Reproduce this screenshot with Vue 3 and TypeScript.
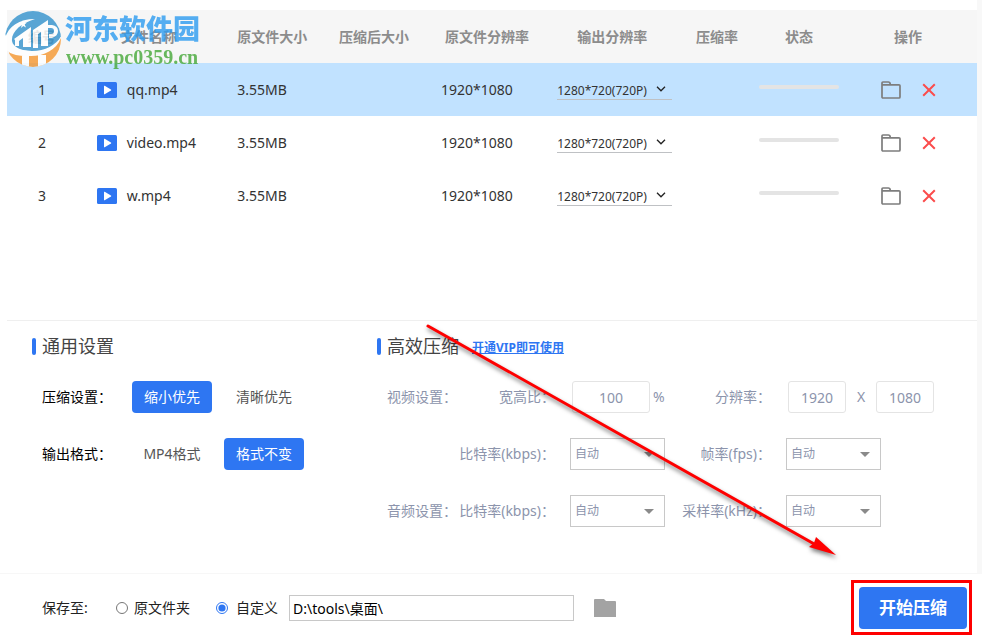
<script setup lang="ts">
import { ref } from 'vue'

interface VideoFile {
  id: number
  name: string
  size: string
  resolution: string
  output: string
}

const files = ref<VideoFile[]>([
  { id: 1, name: 'qq.mp4', size: '3.55MB', resolution: '1920*1080', output: '1280*720(720P)' },
  { id: 2, name: 'video.mp4', size: '3.55MB', resolution: '1920*1080', output: '1280*720(720P)' },
  { id: 3, name: 'w.mp4', size: '3.55MB', resolution: '1920*1080', output: '1280*720(720P)' },
])

const columns = ['编号', '文件名称', '原文件大小', '压缩后大小', '原文件分辨率', '输出分辨率', '压缩率', '状态', '操作']

const selectedId = ref(1)
const mode = ref('small')
const format = ref('same')
const saveTo = ref('custom')
const savePath = ref('D:\\tools\\桌面\\')
const ratio = ref('100')
const outWidth = ref('1920')
const outHeight = ref('1080')

function removeFile(id: number) {
  files.value = files.value.filter((f) => f.id !== id)
}
</script>

<template>
  <div class="app">
    <main class="workspace">
      <section class="files">
        <table class="file-table">
          <colgroup>
            <col class="c-no" /><col class="c-name" /><col class="c-size" /><col class="c-after" />
            <col class="c-res" /><col class="c-out" /><col class="c-rate" /><col class="c-state" /><col class="c-ops" />
          </colgroup>
          <thead>
            <tr>
              <th v-for="c in columns" :key="c" scope="col">{{ c }}</th>
            </tr>
          </thead>
          <tbody>
            <tr v-for="f in files" :key="f.id" :class="{ selected: f.id === selectedId }" @click="selectedId = f.id">
              <td class="no">{{ f.id }}</td>
              <td class="name">
                <div class="name-box">
                  <svg class="play" width="20" height="16" viewBox="0 0 20 16" aria-hidden="true">
                    <rect width="20" height="16" rx="1.5" fill="#2e76f2" />
                    <path d="M7 4.200v7.600q0 .8.7.4l6.200-3.600q.8-.6 0-1.200l-6.200-3.600q-.7-.4-.7.4z" fill="#fff" />
                  </svg>
                  <span>{{ f.name }}</span>
                </div>
              </td>
              <td class="indent">{{ f.size }}</td>
              <td></td>
              <td class="indent">{{ f.resolution }}</td>
              <td class="out">
                <div class="line-select">
                  <select v-model="f.output" :aria-label="'输出分辨率 ' + f.name">
                    <option>1280*720(720P)</option>
                  </select>
                  <svg class="chevron" width="10" height="6" viewBox="0 0 10 6" aria-hidden="true">
                    <path d="M1 .8l4 4 4-4" fill="none" stroke="#222" stroke-width="1.300" />
                  </svg>
                </div>
              </td>
              <td></td>
              <td class="state"><progress value="0" max="100" :aria-label="'状态 ' + f.name"></progress></td>
              <td class="ops">
                <div class="ops-box">
                  <button type="button" class="icon-btn" :aria-label="'打开文件夹 ' + f.name">
                    <svg width="20" height="18" viewBox="0 0 20 18" aria-hidden="true">
                      <path d="M1 16V2.200Q1 1 2 1h5.500q1.200 0 1.500 1l.3 1.800H18q1 0 1 1V16q0 1-1 1H2q-1 0-1-1zM1 3.900h9" fill="none" stroke="#7d7d7d" stroke-width="1.700" />
                    </svg>
                  </button>
                  <button type="button" class="icon-btn" :aria-label="'删除 ' + f.name" @click.stop="removeFile(f.id)">
                    <svg width="14" height="14" viewBox="0 0 14 14" aria-hidden="true">
                      <path d="M1.200 1.200l11.600 11.600M12.800 1.200L1.200 12.800" stroke="#fb4c4c" stroke-width="2" />
                    </svg>
                  </button>
                </div>
              </td>
            </tr>
          </tbody>
        </table>
      </section>

      <section class="settings">
        <div class="general">
          <h2>通用设置</h2>
          <div class="option-row" role="group" aria-labelledby="mode-label">
            <span id="mode-label" class="option-label">压缩设置：</span>
            <button type="button" class="choice" :class="{ on: mode === 'small' }" @click="mode = 'small'">缩小优先</button>
            <button type="button" class="choice" :class="{ on: mode === 'clear' }" @click="mode = 'clear'">清晰优先</button>
          </div>
          <div class="option-row" role="group" aria-labelledby="format-label">
            <span id="format-label" class="option-label">输出格式：</span>
            <button type="button" class="choice" :class="{ on: format === 'mp4' }" @click="format = 'mp4'">MP4格式</button>
            <button type="button" class="choice" :class="{ on: format === 'same' }" @click="format = 'same'">格式不变</button>
          </div>
        </div>

        <div class="advanced">
          <div class="heading-row">
            <h2>高效压缩</h2>
            <a href="#vip" class="vip">开通VIP即可使用</a>
          </div>
          <div class="param-row">
            <span>视频设置：</span>
            <label class="right" for="ratio">宽高比：</label>
            <div class="field numeric"><input id="ratio" v-model="ratio" class="num wide" type="text" /><span class="unit">%</span></div>
            <label class="right" for="out-w">分辨率：</label>
            <div class="field numeric">
              <input id="out-w" v-model="outWidth" class="num" type="text" />
              <span class="times">X</span>
              <input v-model="outHeight" class="num" type="text" aria-label="高度" />
            </div>
          </div>
          <div class="param-row">
            <span></span>
            <label class="right" for="v-bitrate">比特率(kbps)：</label>
            <div class="field box-select"><select id="v-bitrate"><option>自动</option></select></div>
            <label class="right" for="fps">帧率(fps)：</label>
            <div class="field box-select"><select id="fps"><option>自动</option></select></div>
          </div>
          <div class="param-row">
            <span>音频设置：</span>
            <label class="right" for="a-bitrate">比特率(kbps)：</label>
            <div class="field box-select"><select id="a-bitrate"><option>自动</option></select></div>
            <label class="right" for="sample">采样率(kHz)：</label>
            <div class="field box-select"><select id="sample"><option>自动</option></select></div>
          </div>
        </div>
      </section>
    </main>

    <footer class="footer">
      <span class="save-label">保存至:</span>
      <label class="radio"><input v-model="saveTo" type="radio" name="save" value="origin" />原文件夹</label>
      <label class="radio custom"><input v-model="saveTo" type="radio" name="save" value="custom" />自定义</label>
      <input v-model="savePath" class="path" type="text" aria-label="保存路径" />
      <button type="button" class="icon-btn browse" aria-label="选择文件夹">
        <svg width="22" height="18" viewBox="0 0 22 18" aria-hidden="true">
          <path d="M0 1q0-1 1-1h9l2 2h9q1 0 1 1v15H0z" fill="#a3a3a3" />
        </svg>
      </button>
      <div class="highlight"><button type="button" class="start">开始压缩</button></div>
    </footer>

    <div class="watermark" aria-hidden="true">
      <svg width="58" height="58" viewBox="0 0 58 58">
        <defs><clipPath id="disc"><circle cx="29" cy="29" r="28" /></clipPath></defs>
        <circle cx="29" cy="29" r="28" fill="#fff" />
        <g clip-path="url(#disc)">
          <path d="M0 0h58v24C54 34 42 41 28 41 16 41 8 37 5 32L0 22z" fill="#3292cc" />
          <path d="M58 25C54 39 41 46 27 46 17 46 9 43 4 38L8 58h50z" fill="#f5962f" />
          <path d="M0 36C0 20 12 9 31 9 17 13 7 22 8 31c1 6 9 10 20 10v5C12 47 2 43 0 36z" fill="#fff" />
          <path d="M10 29l17-12v20h-8V28l-4 3v5h-4v-6z" fill="#fff" />
          <path d="M29 20l15-10v26h-7V22l-3 2v14h-5z" fill="#fff" />
          <path d="M44 15h4q6 1 6 6t-6 7h-3v-4h2q3 0 3-3t-3-3h-3z" fill="#fff" />
          <path d="M18 46h7v12h-7zM34 45h8v13h-8z" fill="#fff" />
          <path d="M19 10l1 3 3-.5-2.300 2 1.300 3-2.700-1.600-2.300 2 .7-3-2.700-1.400 3-.4z" fill="#fff" />
        </g>
      </svg>
      <div class="mark-text">
        <span class="mark-name">河东软件园</span>
        <span class="mark-url">www.pc0359.cn</span>
      </div>
    </div>

    <svg class="arrow" width="430" height="250" viewBox="0 0 430 250" aria-hidden="true">
      <path d="M8 6l388 219" stroke="#fe0000" stroke-width="3" stroke-linecap="round" />
      <path d="M396 217l20 18-27-8 5-4z" fill="#fe0000" />
    </svg>
  </div>
</template>

<style>
body {
  margin: 0;
  background: #fff;
}
</style>

<style scoped>
.app {
  position: relative;
  display: flex;
  flex-direction: column;
  min-height: 100vh;
  font: 14px/20px "Noto Sans", "Noto Sans CJK SC", sans-serif;
  color: #333;
  overflow: hidden;
}
.app * {
  box-sizing: border-box;
}
button,
input,
select {
  font: inherit;
  color: inherit;
  margin: 0;
}
button {
  cursor: pointer;
}
.workspace {
  flex: 1;
  display: flex;
  flex-direction: column;
  padding-left: 7px;
  border-right: 5px solid #f8f8f8;
  border-bottom: 1px solid #f7f7f7;
}
.files {
  flex: 1;
  padding-top: 10px;
}
.file-table {
  width: 100%;
  table-layout: fixed;
  border-collapse: collapse;
}
.c-no { width: 7.2%; }
.c-name { width: 14.9%; }
.c-size,
.c-after { width: 10.5%; }
.c-res { width: 12.8%; }
.c-out { width: 13%; }
.c-rate { width: 8.6%; }
.c-state { width: 8.3%; }
.c-ops { width: 14.2%; }
th,
td {
  height: 53px;
  padding: 0;
  text-align: left;
  vertical-align: middle;
}
th {
  background: #f6f6f6;
  color: #8c8c8c;
  font-weight: 700;
  text-align: center;
  white-space: nowrap;
}
.selected {
  background: #c1e2ff;
}
.no {
  text-align: center;
}
.name {
  padding-left: 20px;
}
.name-box {
  display: flex;
  align-items: center;
  gap: 10px;
}
.indent {
  padding-left: 16px;
}
.out {
  padding-left: 8px;
}
.line-select {
  position: relative;
  width: 115px;
  border-bottom: 1px solid #bfc1c4;
}
.line-select select {
  display: block;
  width: 100%;
  height: 20px;
  padding: 2px 0 0;
  border: 0;
  background: transparent;
  appearance: none;
  font-size: 12px;
}
.chevron {
  position: absolute;
  right: 6px;
  top: 7px;
  pointer-events: none;
}
.state {
  padding-bottom: 5px;
}
progress {
  display: block;
  width: 80px;
  height: 4px;
  border: 0;
  border-radius: 2px;
  background: #e4e4e4;
  appearance: none;
  overflow: hidden;
}
progress::-webkit-progress-bar {
  background: #e4e4e4;
}
progress::-webkit-progress-value {
  background: #2e76f2;
}
.ops-box {
  display: flex;
  align-items: center;
  justify-content: center;
  gap: 21px;
}
.icon-btn {
  display: flex;
  padding: 0;
  border: 0;
  background: none;
}
.settings {
  display: flex;
  padding: 13px 0 46px 25px;
  border-top: 1px solid #efefef;
}
.general {
  flex: 0 0 345px;
}
.advanced {
  flex: 1;
  color: #8c94ac;
}
h2 {
  display: flex;
  align-items: center;
  gap: 6px;
  margin: 0;
  font-size: 18px;
  line-height: 24px;
  font-weight: 400;
  color: #444;
}
h2::before {
  content: "";
  width: 4px;
  height: 17px;
  border-radius: 2px;
  background: #2e76f2;
}
.heading-row {
  display: flex;
  align-items: center;
  gap: 13px;
}
.vip {
  padding-top: 4px;
  font-size: 12px;
  font-weight: 700;
  color: #2e76f2;
  text-decoration: underline;
}
.option-row,
.param-row {
  height: 32px;
  margin-top: 25px;
  align-items: center;
}
h2 + .option-row,
.heading-row + .param-row {
  margin-top: 23px;
}
.option-row {
  display: flex;
  gap: 12px;
  padding-left: 10px;
}
.option-label {
  width: 78px;
  color: #000;
}
.choice {
  width: 80px;
  height: 32px;
  padding: 0;
  border: 0;
  border-radius: 4px;
  background: none;
  color: #555;
}
.choice.on {
  background: #2e76f2;
  color: #fff;
}
.heading-row {
  height: 24px;
}
.param-row {
  display: grid;
  grid-template-columns: 70px 98px 110px 106px 1fr;
  padding-left: 10px;
  white-space: nowrap;
}
.right {
  justify-self: end;
}
.field {
  display: flex;
  align-items: center;
  margin-left: 15px;
}
.numeric {
  padding-left: 2px;
}
.num {
  width: 58px;
  height: 32px;
  padding: 0;
  border: 1px solid #e4e4e4;
  border-radius: 3px;
  background: #fff;
  text-align: center;
}
.num.wide {
  width: 78px;
}
.unit {
  width: 15px;
  margin-left: 3px;
}
.times {
  width: 30px;
  text-align: center;
}
.box-select {
  position: relative;
  width: 95px;
}
.box-select select {
  width: 100%;
  height: 32px;
  padding: 0 4px;
  border: 1px solid #c8c8c8;
  border-radius: 0;
  background: #fff;
  appearance: none;
  font-size: 12px;
}
.box-select::after {
  content: "";
  position: absolute;
  right: 11px;
  top: 14px;
  border: 5px solid transparent;
  border-top-color: #8a8a8a;
  border-bottom: 0;
  pointer-events: none;
}
.footer {
  display: flex;
  align-items: center;
  padding: 6px 10px 2px 42px;
  color: #222;
}
.save-label {
  width: 74px;
}
.radio {
  display: flex;
  align-items: center;
  gap: 6px;
  width: 100px;
}
.radio.custom {
  gap: 8px;
  width: 73px;
}
.radio input {
  width: 12px;
  height: 12px;
  accent-color: #2e76f2;
}
.path {
  width: 285px;
  height: 26px;
  padding: 0 3px;
  border: 1px solid #c8c8c8;
  color: #000;
}
.browse {
  margin-left: 20px;
}
.highlight {
  margin-left: auto;
  padding: 4px 2px 3px 5px;
  border: 3px solid #fe0000;
}
.start {
  display: block;
  width: 108px;
  height: 42px;
  padding: 0;
  border: 0;
  border-radius: 4px;
  background: #2e76f2;
  color: #fff;
  font-size: 17px;
  font-weight: 700;
}
.watermark {
  position: absolute;
  left: 4px;
  top: 10px;
  display: flex;
  gap: 3px;
  opacity: 0.8;
  pointer-events: none;
}
.mark-text {
  display: flex;
  flex-direction: column;
}
.mark-name {
  font: 900 27px/36px "Noto Sans CJK SC", sans-serif;
  color: #2c9cf0;
}
.mark-url {
  padding-left: 1px;
  font: 700 20px/22px "Liberation Serif", serif;
  color: #45a838;
}
.arrow {
  position: absolute;
  left: 420px;
  top: 320px;
  pointer-events: none;
  filter: drop-shadow(1px 3px 2px rgba(0, 0, 0, 0.5));
}
</style>
